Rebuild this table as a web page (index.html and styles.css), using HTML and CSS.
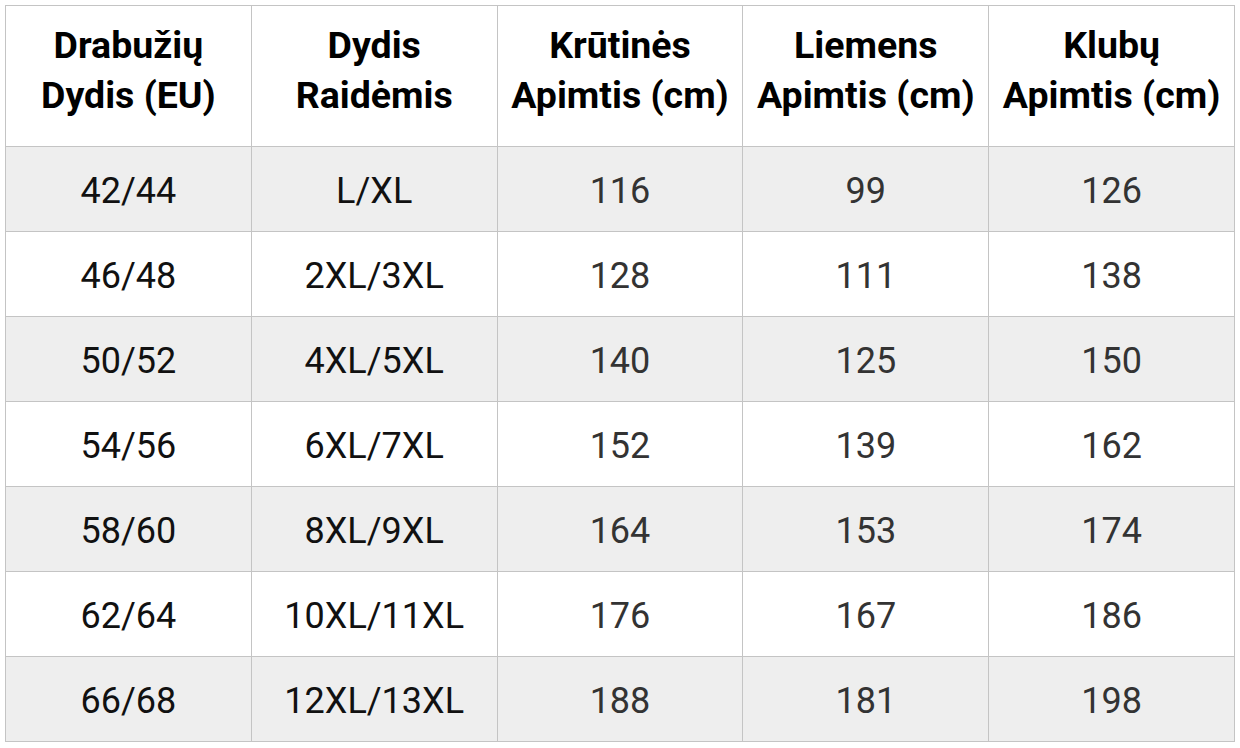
FILE: index.html
```html
<!DOCTYPE html>
<html lang="lt">
<head>
<meta charset="utf-8">
<link rel="stylesheet" href="styles.css">
</head>
<body>
<table class="size-table">
  <thead>
    <tr>
      <th>Drabužių<br>Dydis (EU)</th>
      <th>Dydis<br>Raidėmis</th>
      <th>Krūtinės<br>Apimtis (cm)</th>
      <th>Liemens<br>Apimtis (cm)</th>
      <th>Klubų<br>Apimtis (cm)</th>
    </tr>
  </thead>
  <tbody>
    <tr class="alt"><td class="dark">42/44</td><td class="dark">L/XL</td><td>116</td><td>99</td><td>126</td></tr>
    <tr><td class="dark">46/48</td><td class="dark">2XL/3XL</td><td>128</td><td>111</td><td>138</td></tr>
    <tr class="alt"><td class="dark">50/52</td><td class="dark">4XL/5XL</td><td>140</td><td>125</td><td>150</td></tr>
    <tr><td class="dark">54/56</td><td class="dark">6XL/7XL</td><td>152</td><td>139</td><td>162</td></tr>
    <tr class="alt"><td class="dark">58/60</td><td class="dark">8XL/9XL</td><td>164</td><td>153</td><td>174</td></tr>
    <tr><td class="dark">62/64</td><td class="dark">10XL/11XL</td><td>176</td><td>167</td><td>186</td></tr>
    <tr class="alt"><td class="dark">66/68</td><td class="dark">12XL/13XL</td><td>188</td><td>181</td><td>198</td></tr>
  </tbody>
</table>
</body>
</html>
```

FILE: styles.css
```css
html, body {
  margin: 0;
  background: #ffffff;
}
body {
  padding: 5px 0 0 5px;
  font-family: Roboto, "Liberation Sans", sans-serif;
}
.size-table {
  border-collapse: collapse;
  table-layout: fixed;
  width: 1230px;
}
.size-table th,
.size-table td {
  border: 1px solid #c4c4c4;
  text-align: center;
  vertical-align: middle;
  padding: 0;
}
.size-table th {
  height: 128px;
  padding-bottom: 12px;
  font-size: 37.5px;
  font-weight: 700;
  line-height: 50px;
  color: #000;
}
.size-table td {
  height: 80px;
  padding-top: 4px;
  font-size: 36px;
  font-weight: 400;
  color: #333;
  line-height: 40px;
}
.size-table td.dark {
  color: #111;
}
.size-table tr.alt td {
  background: #eeeeee;
}
```
